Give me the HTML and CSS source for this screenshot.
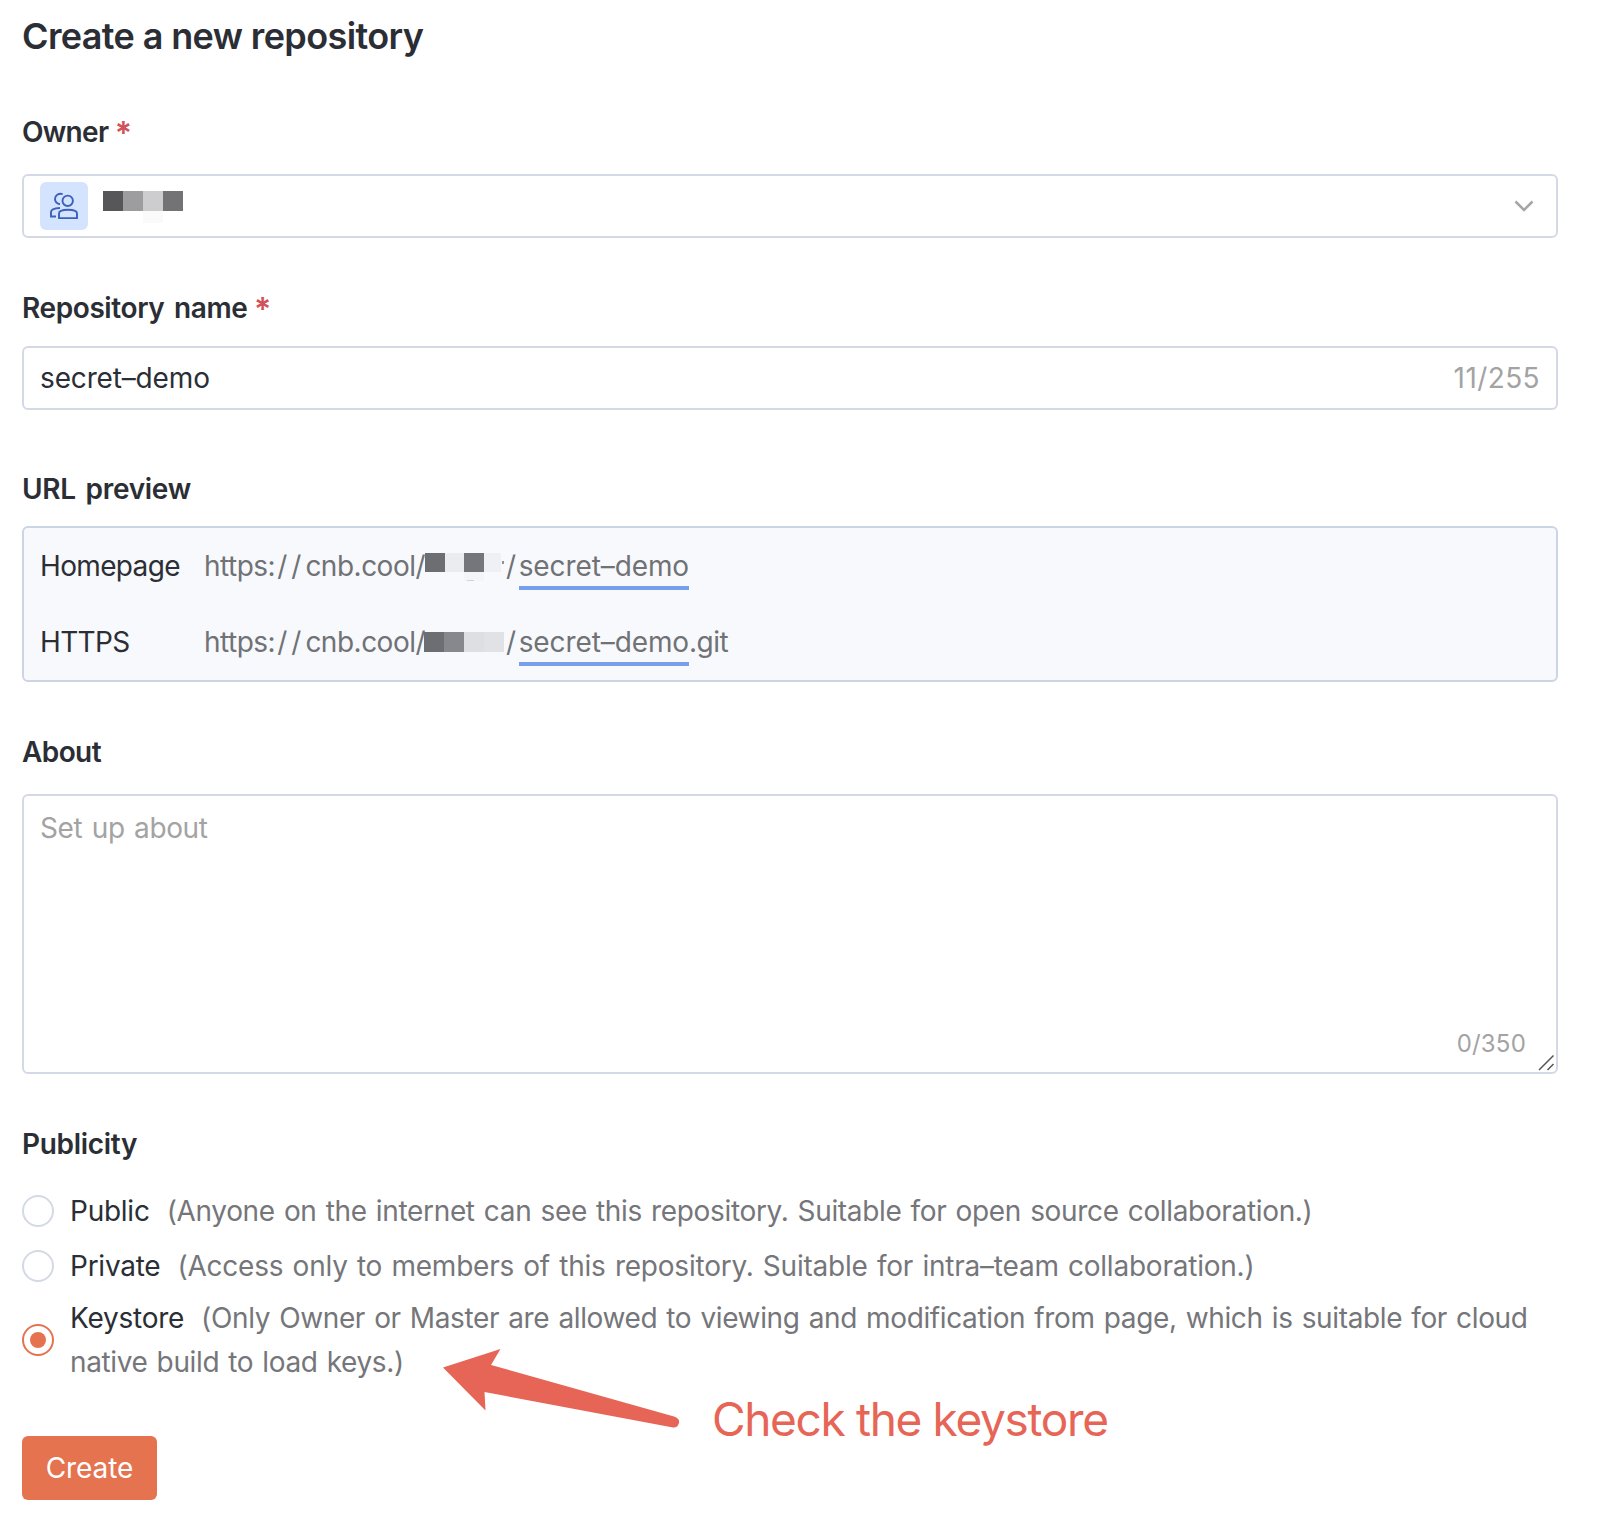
FILE: index.html
```html
<!DOCTYPE html>
<html lang="en">
<head>
    <meta charset="UTF-8">
    <title>Create a new repository</title>
    <link rel="stylesheet" href="styles.css">
</head>
<body>
    <form class="repo-form">
        <h1 class="title">Create a new repository</h1>

        <div class="label owner-label">Owner <span class="required">*</span></div>
        <div class="field">
            <span class="avatar">
                <svg width="30" height="30" viewBox="0 0 30 30" fill="none" stroke="#3b60bd" stroke-width="1.9">
                    <circle cx="18.7" cy="9.8" r="5.2"/>
                    <path d="M13.700 3.100C9.500 2 6 4.500 6 8c0 2.600 1.800 4.600 5 5.200"/>
                    <path d="M10 27.100v-4.600c0-2.400 4-3.700 9-3.700s9 1.300 9 3.700v4.600z"/>
                    <path d="M11 17C5.500 17.200 2 18.800 2 21v4.500h5"/>
                </svg>
            </span>
            <svg class="owner-mask" width="81" height="34" viewBox="0 0 81 34" shape-rendering="crispEdges">
                <rect x="0" y="0" width="20" height="20" fill="#575759"/>
                <rect x="20" y="0" width="20" height="20" fill="#9d9d9f"/>
                <rect x="40" y="0" width="20" height="20" fill="#cdcdcf"/>
                <rect x="60" y="0" width="20" height="20" fill="#737375"/>
                <rect x="40" y="20" width="20" height="12" fill="#fafafb"/>
            </svg>
            <svg class="chevron" width="20" height="12" viewBox="0 0 20 12" fill="none" stroke="#a6a6a6" stroke-width="2.5">
                <path d="M1.500 1.500l8.500 8.500 8.500-8.500"/>
            </svg>
        </div>

        <div class="label name-label">Repository name <span class="required">*</span></div>
        <div class="field">
            <span class="value">secret–demo</span>
            <span class="count">11/255</span>
        </div>

        <div class="label url-label">URL preview</div>
        <div class="preview">
            <div class="preview-row">
                <span class="preview-key">Homepage</span>
                <span class="url">https:<span class="slashes">//</span>cnb.cool/</span>
                <svg class="mask" width="80" height="32" viewBox="0 0 80 32" shape-rendering="crispEdges">
                    <rect x="1" y="3" width="20" height="19" fill="#6d6e72"/>
                    <rect x="21" y="3" width="19" height="19" fill="#ebecf0"/>
                    <rect x="40" y="3" width="20" height="19" fill="#75767b"/>
                    <rect x="60" y="3" width="17" height="19" fill="#eff0f4"/>
                    <rect x="40" y="22" width="20" height="9" fill="#f4f5f9"/>
                    <rect x="43" y="30" width="7" height="1" fill="#d3d4d8"/>
                    <rect x="78" y="11" width="2" height="3" fill="#8f9094"/>
                </svg>
                <span class="url">/<span class="slug">secret–demo</span></span>
            </div>
            <div class="preview-row">
                <span class="preview-key">HTTPS</span>
                <span class="url">https:<span class="slashes">//</span>cnb.cool/</span>
                <svg class="mask" width="80" height="32" viewBox="0 0 80 32" shape-rendering="crispEdges">
                    <rect x="0" y="6" width="20" height="20" fill="#6d6e72"/>
                    <rect x="20" y="6" width="20" height="20" fill="#87888d"/>
                    <rect x="40" y="6" width="20" height="20" fill="#dedfe3"/>
                    <rect x="60" y="6" width="20" height="20" fill="#e1e2e6"/>
                </svg>
                <span class="url">/<span class="slug">secret–demo</span>.git</span>
            </div>
        </div>

        <div class="label about-label">About</div>
        <div class="about">
            <span class="placeholder">Set up about</span>
            <span class="about-count">0/350</span>
            <svg class="resizer" width="17" height="17" viewBox="0 0 17 17" fill="none" stroke="#555" stroke-width="1.5">
                <path d="M1 16L15.500 1.500M9.500 16l6-6"/>
            </svg>
        </div>

        <div class="label publicity-label">Publicity</div>
        <label class="option option-public">
            <span class="radio"></span>
            <span class="option-text"><span class="option-name">Public</span><span class="desc">(Anyone on the internet can see this repository. Suitable for open source collaboration.)</span></span>
        </label>
        <label class="option option-private">
            <span class="radio"></span>
            <span class="option-text"><span class="option-name">Private</span><span class="desc">(Access only to members of this repository. Suitable for intra–team collaboration.)</span></span>
        </label>
        <label class="option option-keystore">
            <span class="radio checked"></span>
            <span class="option-text"><span class="option-name">Keystore</span><span class="desc">(Only Owner or Master are allowed to viewing and modification from page, which is suitable for cloud<br>native build to load keys.)</span></span>
        </label>

        <button type="button" class="create-btn">Create</button>
    </form>

    <div class="note">
        <svg class="arrow" width="240" height="82" viewBox="0 0 240 82">
            <path d="M1 20.500L58.500 2 49 18 232 69.500Q238 71.500 237 76 235.500 81 231 80.500L42.500 45l1 18.500z" fill="#e66556"/>
        </svg>
        <span class="note-text">Check the keystore</span>
    </div>
</body>
</html>
```
FILE: styles.css
```css
* {
    box-sizing: border-box;
}

body {
    margin: 0;
    background: #fff;
    color: #2b2e34;
    font-family: Inter, "Liberation Sans", sans-serif;
    font-size: 28px;
    line-height: 44px;
}

svg {
    display: block;
    flex: none;
}

.repo-form {
    width: 1536px;
    margin-left: 22px;
    padding-top: 12px;
}

.title {
    margin: 0;
    font-size: 36px;
    font-weight: 600;
    line-height: 48px;
    letter-spacing: -0.62px;
}

.label {
    height: 44px;
    font-weight: 600;
    letter-spacing: -0.3px;
    word-spacing: 3px;
    white-space: nowrap;
}

.required {
    margin-left: -3px;
    color: #d1525a;
    font-size: 32px;
    line-height: 1;
    vertical-align: -3px;
}

.owner-label {
    margin-top: 50px;
    margin-bottom: 20px;
    letter-spacing: -0.7px;
}

.name-label {
    margin-top: 48px;
    margin-bottom: 16px;
    letter-spacing: -0.4px;
}

.url-label {
    margin-top: 57px;
    margin-bottom: 15px;
}

.about-label {
    margin-top: 48px;
    margin-bottom: 20px;
    letter-spacing: -0.6px;
}

.publicity-label {
    margin-top: 48px;
    margin-bottom: 23px;
}

.field {
    display: flex;
    align-items: center;
    height: 64px;
    padding: 0 16px;
    border: 2px solid #d5d9e6;
    border-radius: 6px;
}

.avatar {
    display: flex;
    align-items: center;
    justify-content: center;
    width: 48px;
    height: 48px;
    border-radius: 6px;
    background: #d4e4ff;
}

.owner-mask {
    margin-top: 4px;
    margin-left: 15px;
}

.chevron {
    margin-left: auto;
    margin-right: 6px;
}

.value {
    letter-spacing: -0.15px;
}

.count {
    margin-left: auto;
    color: #a3a3a3;
    letter-spacing: 0.4px;
}

/* URL preview box */
.preview {
    height: 156px;
    padding-left: 16px;
    border: 2px solid #ccd5e3;
    border-radius: 6px;
    background: #f8f9fd;
}

.preview-row {
    display: flex;
    align-items: center;
    height: 76px;
}

.preview-key {
    width: 164px;
    letter-spacing: -0.65px;
}

.url {
    color: #707276;
    letter-spacing: -0.5px;
}

.slashes {
    margin-left: 2px;
    letter-spacing: 4px;
}

.mask {
    margin-left: -1px;
    margin-right: 2px;
}

.slug {
    margin-left: 3px;
    padding-bottom: 3px;
    border-bottom: 4px solid #779fec;
    letter-spacing: -0.1px;
}

/* About textarea */
.about {
    display: flex;
    position: relative;
    height: 280px;
    padding: 10px 16px 6px;
    border: 2px solid #d5d9e6;
    border-radius: 6px;
}

.placeholder {
    color: #a3a3a3;
    letter-spacing: -0.4px;
    word-spacing: 2px;
}

.about-count {
    align-self: flex-end;
    margin-left: auto;
    margin-right: 14px;
    color: #a3a3a3;
    font-size: 24px;
    letter-spacing: 0.2px;
}

.resizer {
    position: absolute;
    right: 1px;
    bottom: 1px;
}

/* Publicity options */
.option {
    display: flex;
    align-items: center;
}

.option-public {
    margin-bottom: 11px;
}

.option-private {
    margin-bottom: 8px;
}

.radio {
    display: flex;
    flex: none;
    align-items: center;
    justify-content: center;
    width: 32px;
    height: 32px;
    margin-right: 16px;
    border: 2px solid #d5d9e6;
    border-radius: 50%;
}

.radio.checked {
    border-color: #e5734f;
}

.radio.checked::after {
    content: "";
    width: 16px;
    height: 16px;
    border-radius: 50%;
    background: #e5734f;
}

.option-text {
    white-space: nowrap;
}

.option-name {
    margin-right: 17px;
    letter-spacing: -0.25px;
}

.desc {
    color: #75767a;
    letter-spacing: -0.34px;
    word-spacing: 1.6px;
}

.option-private .desc {
    letter-spacing: -0.22px;
}

.option-keystore .desc {
    letter-spacing: -0.37px;
}

.create-btn {
    display: block;
    width: 135px;
    height: 64px;
    margin-top: 52px;
    padding: 0;
    border: 0;
    border-radius: 6px;
    background: #e5734f;
    color: #fff;
    font: inherit;
    letter-spacing: -0.1px;
}

/* Hint laid over the form */
.note {
    display: flex;
    position: absolute;
    left: 442px;
    top: 1347px;
    color: #e66556;
}

.note-text {
    margin-top: 42px;
    margin-left: 30px;
    font-size: 46px;
    line-height: 60px;
    letter-spacing: -1.35px;
    white-space: nowrap;
}
```
